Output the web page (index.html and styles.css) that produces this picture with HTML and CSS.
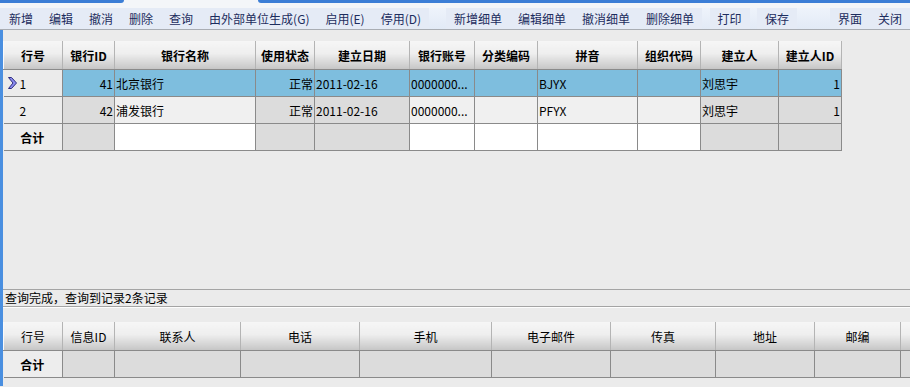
FILE: index.html
```html
<!DOCTYPE html>
<html lang="zh-CN">
<head>
    <meta charset="UTF-8">
    <title>银行档案</title>
    <link rel="stylesheet" href="styles.css">
</head>
<body>
    <div class="title-strip">
        <div class="strip-left"></div>
        <div class="strip-gap"></div>
        <div class="strip-right"></div>
    </div>
    <div class="toolbar">
        <span class="tb-btn">新增</span>
        <span class="tb-btn">编辑</span>
        <span class="tb-btn">撤消</span>
        <span class="tb-btn">删除</span>
        <span class="tb-btn">查询</span>
        <span class="tb-btn">由外部单位生成(G)</span>
        <span class="tb-btn">启用(E)</span>
        <span class="tb-btn">停用(D)</span>
        <span class="tb-space w20"></span>
        <span class="tb-btn">新增细单</span>
        <span class="tb-btn">编辑细单</span>
        <span class="tb-btn">撤消细单</span>
        <span class="tb-btn">删除细单</span>
        <span class="tb-space w9"></span>
        <span class="tb-btn">打印</span>
        <span class="tb-space w9"></span>
        <span class="tb-btn">保存</span>
        <span class="tb-space w39"></span>
        <span class="tb-btn">界面</span>
        <span class="tb-btn">关闭</span>
    </div>

    <div class="main">
        <div class="master-pane">
            <table class="grid master">
                <colgroup>
                    <col style="width:59px"><col style="width:52px"><col style="width:141px">
                    <col style="width:59px"><col style="width:95px"><col style="width:65px">
                    <col style="width:63px"><col style="width:100px"><col style="width:63px">
                    <col style="width:78px"><col style="width:63px">
                </colgroup>
                <thead>
                    <tr>
                        <th>行号</th><th>银行ID</th><th>银行名称</th><th>使用状态</th>
                        <th>建立日期</th><th>银行账号</th><th>分类编码</th><th>拼音</th>
                        <th>组织代码</th><th>建立人</th><th>建立人ID</th>
                    </tr>
                </thead>
                <tbody>
                    <tr class="selected">
                        <td class="rowno"><svg class="cur" width="9" height="12" viewBox="0 0 9 12"><polygon points="0.5,0.5 3.5,0.5 8.5,6 3.5,11.5 0.5,11.5 5,6" fill="#8c8cf0" stroke="#2c2c7c" stroke-width="1"/></svg>1</td>
                        <td class="num">41</td><td>北京银行</td><td class="num">正常</td>
                        <td>2011-02-16</td><td>0000000...</td><td></td><td>BJYX</td>
                        <td></td><td>刘思宇</td><td class="num">1</td>
                    </tr>
                    <tr>
                        <td class="rowno">2</td>
                        <td class="num ro">42</td><td>浦发银行</td><td class="num ro">正常</td>
                        <td class="ro">2011-02-16</td><td>0000000...</td><td></td><td>PFYX</td>
                        <td></td><td class="ro">刘思宇</td><td class="num ro">1</td>
                    </tr>
                    <tr class="total">
                        <td class="rowno sum">合计</td>
                        <td class="ro"></td><td class="blank"></td><td class="ro"></td>
                        <td class="ro"></td><td class="blank"></td><td class="blank"></td><td class="blank"></td>
                        <td class="blank"></td><td class="ro"></td><td class="ro"></td>
                    </tr>
                </tbody>
            </table>
        </div>

        <div class="status">查询完成，查询到记录2条记录</div>

        <div class="detail-pane">
            <table class="grid detail">
                <colgroup>
                    <col style="width:59px"><col style="width:52px"><col style="width:126px">
                    <col style="width:119px"><col style="width:132px"><col style="width:119px">
                    <col style="width:105px"><col style="width:99px"><col style="width:86px">
                    <col style="width:80px">
                </colgroup>
                <thead>
                    <tr>
                        <th>行号</th><th>信息ID</th><th>联系人</th><th>电话</th><th>手机</th>
                        <th>电子邮件</th><th>传真</th><th>地址</th><th>邮编</th><th></th>
                    </tr>
                </thead>
                <tbody>
                    <tr class="total">
                        <td class="rowno sum">合计</td>
                        <td class="ro"></td><td class="ro"></td><td class="ro"></td><td class="ro"></td>
                        <td class="ro"></td><td class="ro"></td><td class="ro"></td><td class="ro"></td><td class="ro"></td>
                    </tr>
                </tbody>
            </table>
        </div>
    </div>
</body>
</html>
```

FILE: styles.css
```css
body {
    margin: 0;
    background-color: #ebebeb;
    font-family: "Noto Sans CJK SC", "Liberation Sans", sans-serif;
    font-size: 12px;
    color: #000;
    width: 910px;
    height: 387px;
    overflow: hidden;
}

/* window title strip */
.title-strip {
    display: flex;
    height: 3px;
    background: #f4f6f9;
}
.strip-left {
    width: 124px;
    background: #3c7ed6;
    border-bottom-right-radius: 3px;
}
.strip-gap {
    width: 134px;
}
.strip-right {
    flex: 1;
    background: #3c7ed6;
    border-bottom-left-radius: 3px;
}

.toolbar {
    display: flex;
    align-items: stretch;
    height: 21px;
    border-top: 5px solid #f4f6f9;
    border-bottom: 1px solid #a9adb3;
    padding-left: 1px;
    background: #e5ebf6;
    white-space: nowrap;
}
.tb-btn {
    padding: 0 8px;
    line-height: 21px;
    color: #1d2d5e;
}
.tb-space {
    background: linear-gradient(#eef3fb, #e2eaf6);
}
.w20 { width: 20px; }
.w9 { width: 9px; }
.w39 { width: 39px; }

.main {
    height: 356px;
    border-left: 3px solid #4a8fe0;
    box-sizing: border-box;
    padding-top: 11px;
    overflow: hidden;
}

.master-pane {
    height: 248px;
}

.grid {
    border-collapse: collapse;
    table-layout: fixed;
}
.grid.master {
    width: 838px;
}
.grid.detail {
    width: 977px;
}

.grid th {
    height: 28px;
    padding: 0;
    text-align: center;
    font-weight: bold;
    background: linear-gradient(#f6f6f6, #eeeeee 45%, #c6c6c6);
    border-left: 1px solid #fafafa;
    border-right: 1px solid #b4b4b4;
    border-bottom: 1px solid #8a8a8a;
    white-space: nowrap;
    overflow: hidden;
}
.grid.detail th {
    font-weight: normal;
}

.grid td {
    height: 26px;
    padding: 0 1px;
    border: 1px solid #8a8a8a;
    background: #f0f0f0;
    white-space: nowrap;
    overflow: hidden;
}
.grid tr:first-child td {
    border-top: none;
}
.grid td:first-child {
    border-left: none;
}

.grid td.rowno {
    background: #ededed;
    padding-left: 16px;
    position: relative;
}
.grid td.sum {
    padding-left: 0;
    text-align: center;
    font-weight: bold;
}
.cur {
    position: absolute;
    left: 4px;
    top: 7px;
}

.grid td.num {
    text-align: right;
}
.grid td.ro {
    background: #dcdcdc;
}
.grid td.blank {
    background: #fff;
}
.grid tr.selected td {
    background: #7ebede;
}
.grid tr.selected td.rowno {
    background: #ebebeb;
}

.status {
    height: 16px;
    line-height: 16px;
    padding-left: 2px;
    border-top: 1px solid #a4a4a4;
    border-bottom: 1px solid #a4a4a4;
    box-shadow: 0 1px 0 #fdfdfd;
    white-space: nowrap;
}

.detail-pane {
    margin-top: 15px;
}
```
